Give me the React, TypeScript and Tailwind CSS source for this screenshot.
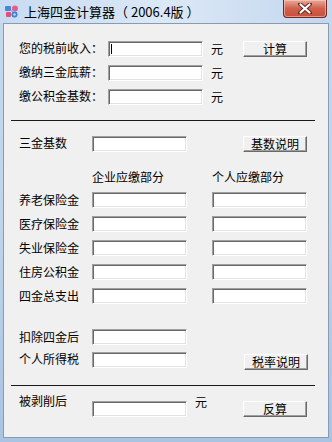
import React from "react";

const FONT = { fontFamily: '"Noto Sans CJK SC", "Noto Sans", sans-serif' };

function Field({ cursor = false }: { cursor?: boolean }) {
  return (
    <div className="relative h-[16px] w-[95px] shrink-0 border border-t-[#a0a0a0] border-l-[#a0a0a0] border-b-white border-r-white bg-white shadow-[inset_1px_1px_0_#696969,inset_-1px_-1px_0_#e3e3e3]">
      {cursor && <div className="absolute left-[2px] top-[2px] h-[10px] w-px bg-black" />}
    </div>
  );
}

function Btn({ children, className = "" }: { children: React.ReactNode; className?: string }) {
  return (
    <div
      className={`flex h-[16px] w-[64px] shrink-0 items-center justify-center border border-t-white border-l-white border-b-[#696969] border-r-[#696969] bg-[#f0f0f0] text-[12px] leading-none text-black shadow-[inset_-1px_-1px_0_#a0a0a0] ${className}`}
    >
      {children}
    </div>
  );
}

function Sep() {
  return <div className="ml-[7px] h-px w-[304px] bg-[#1a1a1a]" />;
}

function TitleIcon() {
  return (
    <svg width="15" height="15" viewBox="0 0 15 15">
      <rect x="1" y="2" width="6" height="5" rx="1" fill="#4a86d8" />
      <rect x="2" y="8" width="5" height="5" rx="1" fill="#e0507a" />
      <circle cx="11" cy="4.5" r="3" fill="#e85c8c" />
      <circle cx="10.5" cy="10.5" r="3" fill="#3d7fd4" />
      <circle cx="10.5" cy="10.5" r="1.2" fill="#bfe0ff" />
      <rect x="7" y="6" width="2" height="2" fill="#9ab4e0" />
    </svg>
  );
}

export default function App() {
  return (
    <div
      className="relative flex h-[442px] w-[332px] flex-col overflow-hidden bg-gradient-to-b from-[#c4d8ee] via-[#bfd4ec] to-[#a9c3e2] text-black"
      style={FONT}
    >
      {/* title bar */}
      <div className="relative flex h-[23px] shrink-0 items-center bg-gradient-to-r from-[#c7dbf1] via-[#dbe8f6] to-[#c3d7ee] pl-[4px]">
        <TitleIcon />
        <span className="ml-[5px] text-[13px] leading-none text-black">上海四金计算器（ 2006.4版 ）</span>
        <div className="absolute right-[5px] top-0 flex h-[18px] w-[44px] items-center justify-center rounded-b-[4px] border border-t-0 border-[#6e2a22] bg-gradient-to-b from-[#e9a99b] via-[#d0604c] to-[#c8503c] shadow-[inset_0_0_0_1px_rgba(255,220,210,0.5)]">
          <svg width="14" height="11" viewBox="0 0 14 11">
            <path d="M2 1 L12 10 M12 1 L2 10" stroke="#5a2a24" strokeWidth="4" strokeLinecap="round" />
            <path d="M2.5 1.5 L11.5 9.5 M11.5 1.5 L2.5 9.5" stroke="#ffffff" strokeWidth="2.2" strokeLinecap="round" />
          </svg>
        </div>
      </div>

      {/* client area */}
      <div className="relative mx-[3px] mb-[4px] flex-1 border border-[#8a9bb0] bg-[#f0f0f0] text-[12px]">
        <div className="flex flex-col">
          {/* income rows */}
          <div className="mt-[17px] flex flex-col gap-[8px] pl-[15px]">
            <div className="flex h-[16px] items-start">
              <span className="w-[89px] leading-[14px]">您的税前收入：</span>
              <Field cursor />
              <span className="ml-[8px] w-[12px] leading-[16px]">元</span>
              <Btn className="ml-[20px]">计算</Btn>
            </div>
            <div className="flex h-[16px] items-start">
              <span className="w-[89px] leading-[14px]">缴纳三金底薪：</span>
              <Field />
              <span className="ml-[8px] w-[12px] leading-[16px]">元</span>
            </div>
            <div className="flex h-[16px] items-start">
              <span className="w-[89px] leading-[14px]">缴公积金基数：</span>
              <Field />
              <span className="ml-[8px] w-[12px] leading-[16px]">元</span>
            </div>
          </div>

          <div className="mt-[15px]">
            <Sep />
          </div>

          {/* base row */}
          <div className="mt-[15px] flex h-[16px] items-start pl-[15px]">
            <span className="w-[73px] leading-[14px]">三金基数</span>
            <Field />
            <Btn className="ml-[56px]">基数说明</Btn>
          </div>

          {/* headers */}
          <div className="mt-[18px] flex pl-[15px] leading-[14px]">
            <span className="w-[73px]" />
            <span className="w-[120px]">企业应缴部分</span>
            <span>个人应缴部分</span>
          </div>

          <div className="mt-[8px] flex flex-col gap-[8px] pl-[15px]">
            {["养老保险金", "医疗保险金", "失业保险金", "住房公积金", "四金总支出"].map((l) => (
              <div key={l} className="flex h-[16px] items-center">
                <span className="w-[73px] leading-[14px]">{l}</span>
                <Field />
                <div className="ml-[25px]">
                  <Field />
                </div>
              </div>
            ))}
          </div>

          {/* tax rows */}
          <div className="mt-[25px] flex h-[16px] items-center pl-[15px]">
            <span className="w-[73px] leading-[14px]">扣除四金后</span>
            <Field />
          </div>
          <div className="mt-[7px] flex items-start pl-[15px]">
            <span className="w-[73px] leading-[14px]">个人所得税</span>
            <Field />
            <Btn className="ml-[57px] mt-[2px] w-[63px]">税率说明</Btn>
          </div>

          <div className="mt-[15px]">
            <Sep />
          </div>

          <div className="mt-[15px] flex h-[16px] items-start pl-[15px]">
            <span className="-mt-[7px] w-[73px] leading-[14px]">被剥削后</span>
            <Field />
            <span className="-mt-[6px] ml-[8px] w-[12px] leading-[14px]">元</span>
            <Btn className="ml-[36px]">反算</Btn>
          </div>
        </div>
      </div>
    </div>
  );
}
